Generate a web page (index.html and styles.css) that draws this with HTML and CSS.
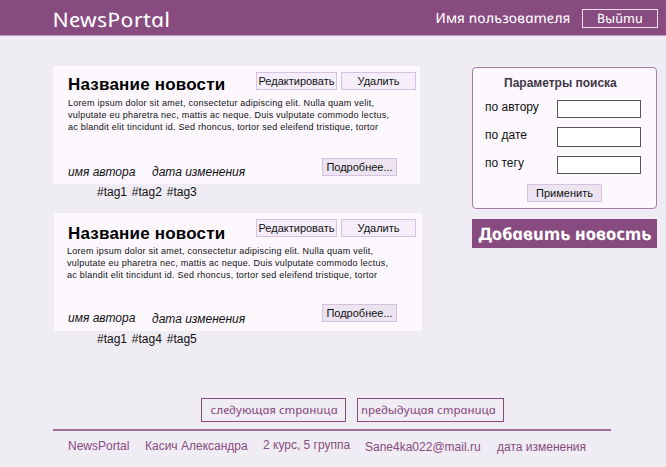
FILE: index.html
```html
<!DOCTYPE html>
<html lang="ru">
<head>
<meta charset="utf-8">
<title>NewsPortal</title>
<link rel="stylesheet" href="styles.css">
</head>
<body>
<header class="top">
  <div class="brand"><span class="round">NewsPortal</span></div>
  <div class="user"><span class="round">Имя пользователя</span></div>
  <button class="logout"><span class="round">Выйти</span></button>
</header>
<div class="content">
  <main class="feed">
    <article class="news">
      <div class="card">
        <div class="head"><h2>Название новости</h2><button class="btn edit">Редактировать</button><button class="btn">Удалить</button></div>
        <p class="text"><span>Lorem ipsum dolor sit amet, consectetur adipiscing elit. Nulla quam velit,</span><span>vulputate eu pharetra nec, mattis ac neque. Duis vulputate commodo lectus,</span><span>ac blandit elit tincidunt id. Sed rhoncus, tortor sed eleifend tristique, tortor</span></p>
        <div class="meta"><i class="author">имя автора</i><i class="date">дата изменения</i><button class="btn more">Подробнее...</button></div>
      </div>
      <div class="tags">#tag1 #tag2 #tag3</div>
    </article>
    <article class="news second">
      <div class="card">
        <div class="head"><h2>Название новости</h2><button class="btn edit">Редактировать</button><button class="btn">Удалить</button></div>
        <p class="text"><span>Lorem ipsum dolor sit amet, consectetur adipiscing elit. Nulla quam velit,</span><span>vulputate eu pharetra nec, mattis ac neque. Duis vulputate commodo lectus,</span><span>ac blandit elit tincidunt id. Sed rhoncus, tortor sed eleifend tristique, tortor</span></p>
        <div class="meta"><i class="author">имя автора</i><i class="date">дата изменения</i><button class="btn more">Подробнее...</button></div>
      </div>
      <div class="tags">#tag1 #tag4 #tag5</div>
    </article>
  </main>
  <aside class="side">
    <form class="search">
      <h3>Параметры поиска</h3>
      <label>по автору<input type="text"></label>
      <label>по дате<input class="tall" type="text"></label>
      <label>по тегу<input type="text"></label>
      <button class="btn apply" type="button">Применить</button>
    </form>
    <button class="add"><span class="round">Добавить новость</span></button>
  </aside>
</div>
<nav class="pager"><button class="next"><span class="round">следующая страница</span></button><button class="prev"><span class="round">предыдущая страница</span></button></nav>
<footer class="foot"><span class="f1">NewsPortal</span><span class="f2">Касич Александра</span><span class="f3">2 курс, 5 группа</span><span class="f4">Sane4ka022@mail.ru</span><span class="f5">дата изменения</span></footer>
</body>
</html>
```
FILE: styles.css
```css
* { box-sizing: border-box; margin: 0; padding: 0; }
body {
  width: 666px; height: 467px; overflow: hidden;
  background: #efecf3; color: #111;
  font: 12px/14px "Liberation Sans", Arial, sans-serif;
  white-space: nowrap;
}
button { font: inherit; color: inherit; border-radius: 0; white-space: nowrap; }
/* cursive letterforms, set upright and slightly widened */
.round { display: inline-block; font-style: italic; transform: scaleX(1.12) skewX(12deg); }
.top {
  display: flex; height: 36px; background: #884b80; color: #fff;
  border-bottom: 1px solid #b795b4; padding-left: 53px;
  font-family: "Noto Sans", sans-serif;
}
.top .round { transform-origin: left center; }
.brand { width: 382px; font-size: 20px; line-height: 39px; letter-spacing: .2px; }
.brand .round { transform: scaleX(1.15) skewX(12deg); margin-left: -1px; }
.user { width: 147px; font-size: 14px; line-height: 35px; }
.user .round { transform: scaleX(1.08) skewX(12deg); }
.logout { width: 76px; height: 19px; margin-top: 9px; border: 1px solid #eee0ed; background: none; font-size: 13px; line-height: 15px; }
.logout .round { transform: scaleX(1.06) skewX(12deg); transform-origin: center; }
.content { display: flex; height: 361px; padding: 30px 0 0 53px; }
.feed { width: 419px; }
.news { height: 147px; }
.card { width: 367px; height: 118px; border-radius: 2px; background: #fcf8fe; padding: 6px 4px 0 15px; }
.head { display: flex; height: 25px; }
h2 { width: 188px; font-size: 17px; line-height: 25px; color: #000; letter-spacing: .2px; }
.btn { width: 75px; height: 18px; border: 1px solid #d8c1e0; background: #f5edf9; font-size: 11px; line-height: 15px; }
.edit { width: 81px; margin-right: 4px; }
.text { height: 61px; font-size: 9px; line-height: 12px; letter-spacing: .245px; color: #111; }
.text span { display: block; }
.meta { display: flex; }
.author { width: 84px; line-height: 28px; }
.date { width: 170px; line-height: 28px; }
.more, .apply { background: #ece4f1; }
.tags { padding-left: 44px; line-height: 16px; word-spacing: 1.5px; }
.second { padding-left: 1px; }
.second .card { width: 368px; padding-left: 14px; }
.second .head { height: 26px; }
.second h2 { line-height: 29px; }
.second .text { height: 59px; margin-left: -1px; }
.second .date { line-height: 30px; }
.second .tags { padding-left: 43px; }
.side { width: 185px; }
.search { height: 142px; margin-top: 1px; border: 1px solid #a57da6; border-radius: 4px; background: #fcf8fe; padding: 8px 12px; }
h3 { height: 24px; padding-left: 19px; font-size: 12px; line-height: 15px; color: #3f3746; }
label { display: flex; height: 28px; line-height: 15px; }
input { width: 84px; height: 18px; margin-left: auto; margin-right: 3px; border: 1px solid #555; background: #fff; }
.tall { height: 20px; margin-top: -1px; }
.apply { display: block; margin-left: 42px; }
.add { width: 185px; height: 29px; margin-top: 10px; border: 0; background: #884b80; color: #fff; font: bold 17px/26px "Noto Sans", sans-serif; }
.add .round { transform: scaleX(1.07) skewX(12deg); }
.pager { display: flex; gap: 11px; height: 32px; padding: 1px 0 0 201px; color: #884b80; font: 11px/20px "Noto Sans", sans-serif; }
.pager button { height: 24px; border: 1px solid #884b80; background: none; }
.next { width: 145px; }
.prev { width: 147px; padding-right: 4px; }
.foot { display: flex; width: 558px; height: 37px; margin-left: 53px; border-top: 2px solid #a06d9c; padding: 7px 0 0 15px; color: #884b80; line-height: 16px; }
.f1 { width: 77px; } .f2 { width: 118px; } .f3 { width: 102px; } .f4 { width: 132px; }
.f3 { margin-top: -1px; }
.f4, .f5 { padding-top: 1px; }
```
